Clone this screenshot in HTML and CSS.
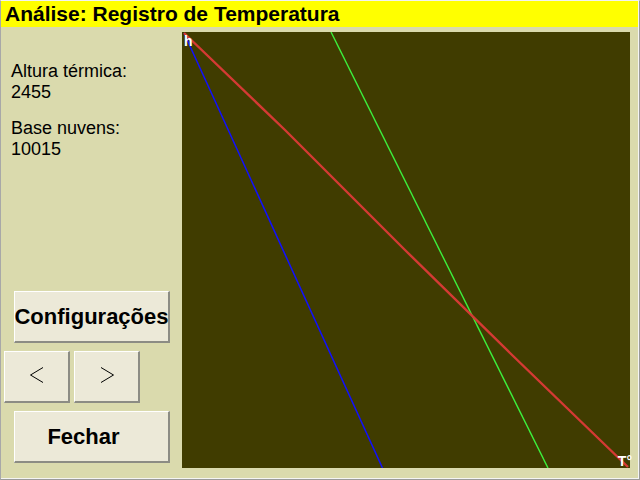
FILE: index.html
```html
<!DOCTYPE html>
<html lang="pt">
<head>
<meta charset="utf-8">
<title>Análise: Registro de Temperatura</title>
<link rel="stylesheet" href="styles.css">
</head>
<body>
<div class="window">
  <div class="title">Análise: Registro de Temperatura</div>
  <div class="main">
    <div class="side">
      <div class="info">
        <p class="stat">Altura térmica:<br>2455</p>
        <p class="stat">Base nuvens:<br>10015</p>
      </div>
      <div class="actions">
        <button class="btn wide">Configurações</button>
        <div class="nav">
          <button class="btn small" aria-label="Anterior">
            <svg width="14" height="16" viewBox="0 0 14 16"><polyline points="13,0.5 0.5,8 13,15.5" fill="none" stroke="#000" stroke-width="1"/></svg>
          </button>
          <button class="btn small" aria-label="Próximo">
            <svg width="14" height="16" viewBox="0 0 14 16"><polyline points="1,0.5 13.5,8 1,15.5" fill="none" stroke="#000" stroke-width="1"/></svg>
          </button>
        </div>
        <button class="btn wide close">Fechar</button>
      </div>
    </div>
    <div class="graph">
      <svg class="plot" width="448" height="436" viewBox="0 0 448 436">
        <line x1="2" y1="1" x2="200.5" y2="436" stroke="#1010ff" stroke-width="1.5"/>
        <line x1="149" y1="0" x2="366" y2="436" stroke="#3cf03c" stroke-width="1.4"/>
        <polyline points="2,1 103,98 223,218 328,321 446,435" fill="none" stroke="#d43a34" stroke-width="2.4"/>
      </svg>
      <span class="lbl lbl-h">h</span>
      <span class="lbl lbl-t">T°</span>
    </div>
  </div>
</div>
</body>
</html>
```
FILE: styles.css
```css
* { box-sizing: border-box; }
html, body { margin: 0; padding: 0; background: #dadaad; }
body { font-family: "Liberation Sans", Arial, sans-serif; }

.window {
  width: 640px;
  height: 480px;
  background: #dadaad;
  border-top: 1px solid #f2f2f2;
  border-left: 1px solid #a8a8a8;
  border-right: 1px solid #9a9a9a;
  border-bottom: 1px solid #9a9a9a;
  box-shadow: inset -1px -1px 0 #f4f4f4;
  display: flex;
  flex-direction: column;
}

.title {
  height: 26px;
  margin-right: 1px;
  background: #ffff00;
  color: #000;
  font-weight: bold;
  font-size: 21px;
  line-height: 26px;
  padding-left: 4px;
  white-space: nowrap;
}

.main {
  flex: 1;
  display: flex;
  min-height: 0;
}

.side {
  width: 181px;
  display: flex;
  flex-direction: column;
  justify-content: space-between;
  padding-bottom: 16px;
}

.info { padding: 34px 0 0 10px; }
.stat {
  margin: 0 0 15px 0;
  font-size: 18px;
  line-height: 21px;
  color: #000;
}

.actions {
  display: flex;
  flex-direction: column;
  gap: 8px;
}

.btn {
  font-family: "Liberation Sans", Arial, sans-serif;
  background: #ece9d8;
  color: #000;
  border: 0;
  border-top: 1px solid #ffffff;
  border-left: 1px solid #ffffff;
  border-right: 2px solid #8c8c84;
  border-bottom: 2px solid #8c8c84;
  padding: 0;
  display: flex;
  align-items: center;
  justify-content: center;
}

.wide {
  width: 156px;
  height: 52px;
  margin-left: 13px;
  font-weight: bold;
  font-size: 22px;
  white-space: nowrap;
}

.close { padding-right: 16px; }

.nav {
  display: flex;
  gap: 4px;
  margin-left: 3px;
}

.small {
  width: 66px;
  height: 52px;
  padding-bottom: 3px;
}

.graph {
  position: relative;
  width: 448px;
  height: 436px;
  margin-top: 5px;
  background: #403c00;
}

.plot { display: block; }

.lbl {
  position: absolute;
  color: #ffffff;
  font-weight: bold;
  font-size: 14px;
  line-height: 14px;
}
.lbl-h { left: 2px; top: 2px; }
.lbl-t { right: -2px; bottom: 0; }
```
